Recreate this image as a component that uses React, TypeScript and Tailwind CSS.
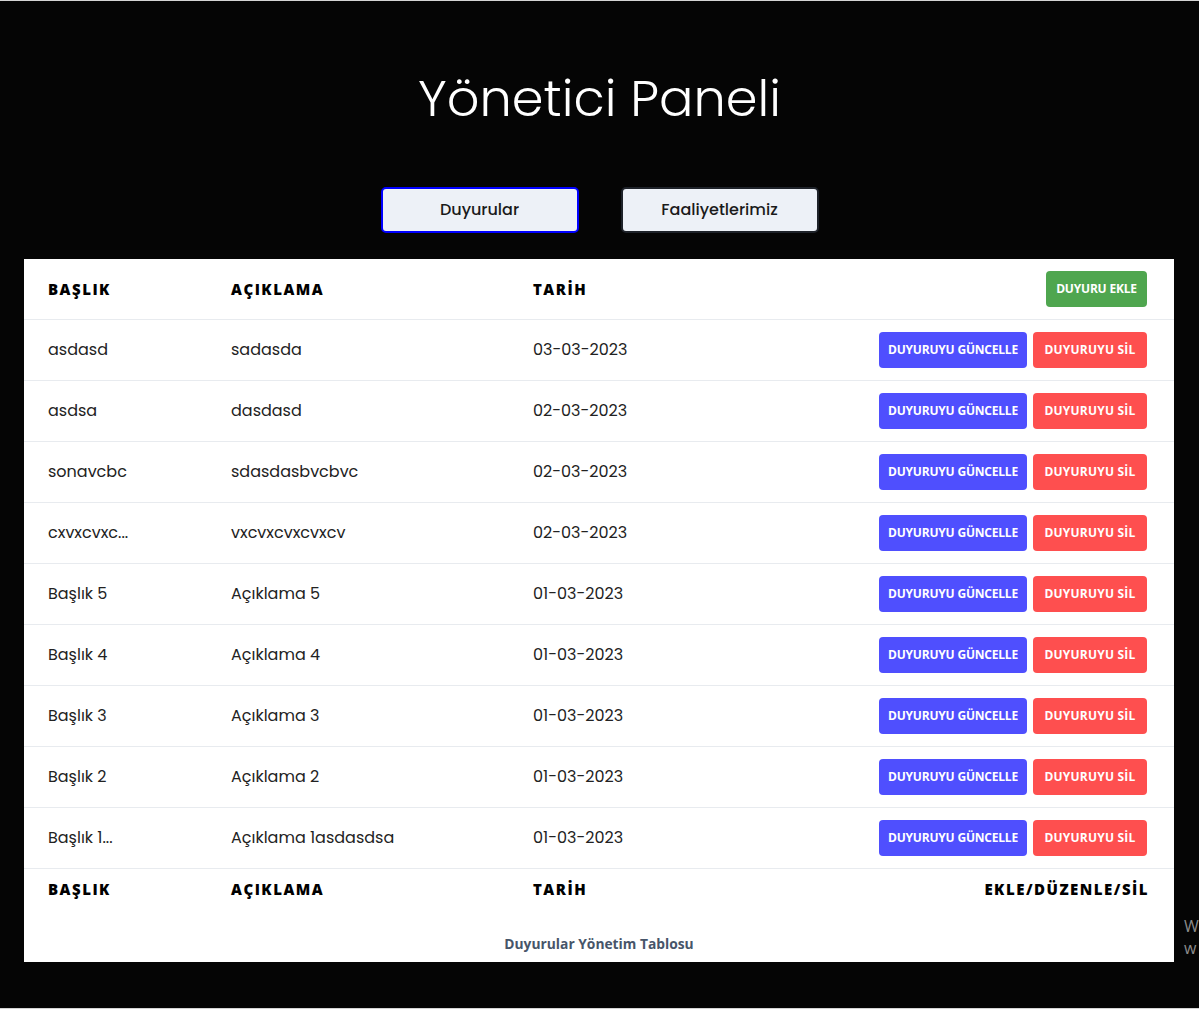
import React from "react";

const rows = [
  ["asdasd", "sadasda", "03-03-2023"],
  ["asdsa", "dasdasd", "02-03-2023"],
  ["sonavcbc", "sdasdasbvcbvc", "02-03-2023"],
  ["cxvxcvxc...", "vxcvxcvxcvxcv", "02-03-2023"],
  ["Başlık 5", "Açıklama 5", "01-03-2023"],
  ["Başlık 4", "Açıklama 4", "01-03-2023"],
  ["Başlık 3", "Açıklama 3", "01-03-2023"],
  ["Başlık 2", "Açıklama 2", "01-03-2023"],
  ["Başlık 1...", "Açıklama 1asdasdsa", "01-03-2023"],
];

const body = "font-['Poppins','Inter',sans-serif]";
const head = "font-['Open_Sans',sans-serif] font-extrabold text-[15px] tracking-[1.5px] text-black";
const btn = "font-['Open_Sans',sans-serif] font-bold text-[12px] text-white rounded-[4px] h-[36px] flex items-center justify-center tracking-[-0.2px]";

export default function App() {
  return (
    <div className="relative w-[1199px] h-[1009px] overflow-hidden bg-[#050505] border-t border-b border-[#d4d4d4]">
      <h1 className={`pt-[63px] text-center text-white leading-[68px] text-[51px] font-light ${body}`}>
        Yönetici Paneli
      </h1>
      <div className="mt-[55px] flex justify-center gap-[42px]">
        <button className={`w-[198px] h-[46px] rounded-[5px] bg-[#edf1f7] border-2 border-[#0000ff] text-[16px] font-medium text-[#1a1a1a] ${body}`}>
          Duyurular
        </button>
        <button className={`w-[198px] h-[46px] rounded-[5px] bg-[#edf1f7] border-2 border-[#1e2229] text-[16px] font-medium text-[#1a1a1a] ${body}`}>
          Faaliyetlerimiz
        </button>
      </div>
      <div className="mt-[26px] ml-[24px] w-[1150px] bg-white">
        <table className="w-full border-collapse">
          <thead>
            <tr className="h-[60px] border-b border-[#e8ebef]">
              <th className={`w-[207px] pl-[24px] text-left ${head}`}>BAŞLIK</th>
              <th className={`w-[302px] text-left ${head}`}>AÇIKLAMA</th>
              <th className={`text-left ${head}`}>TARİH</th>
              <th className="pr-[27px]">
                <div className="flex justify-end">
                  <span className={`${btn} w-[101px] bg-[#4fa64f]`}>DUYURU EKLE</span>
                </div>
              </th>
            </tr>
          </thead>
          <tbody>
            {rows.map((r, i) => (
              <tr key={i} className="h-[61px] border-b border-[#e8ebef]">
                <td className={`pl-[24px] text-[16px] text-[#222] ${body}`}>{r[0]}</td>
                <td className={`text-[16px] text-[#222] ${body}`}>{r[1]}</td>
                <td className={`text-[16px] text-[#222] ${body}`}>{r[2]}</td>
                <td className="pr-[27px]">
                  <div className="flex justify-end gap-[6px]">
                    <span className={`${btn} w-[148px] bg-[#4f4ffe]`}>DUYURUYU GÜNCELLE</span>
                    <span className={`${btn} w-[114px] bg-[#fe4f4f] tracking-[0.2px]`}>DUYURUYU SİL</span>
                  </div>
                </td>
              </tr>
            ))}
          </tbody>
          <tfoot>
            <tr className="h-[42px]">
              <th className={`pl-[24px] text-left ${head}`}>BAŞLIK</th>
              <th className={`text-left ${head}`}>AÇIKLAMA</th>
              <th className={`text-left ${head}`}>TARİH</th>
              <th className={`pr-[25px] text-right ${head}`}>EKLE/DÜZENLE/SİL</th>
            </tr>
          </tfoot>
        </table>
        <div className="pt-[24px] pb-[8px] leading-[20px] text-center font-['Open_Sans',sans-serif] font-bold text-[13.8px] text-[#475569]">
          Duyurular Yönetim Tablosu
        </div>
      </div>
      <div className="absolute left-[1184px] top-[914px] font-['Open_Sans',sans-serif] text-[16px] leading-[22px] text-[#8c8c8c]">
        <div>W</div>
        <div>w</div>
      </div>
    </div>
  );
}
